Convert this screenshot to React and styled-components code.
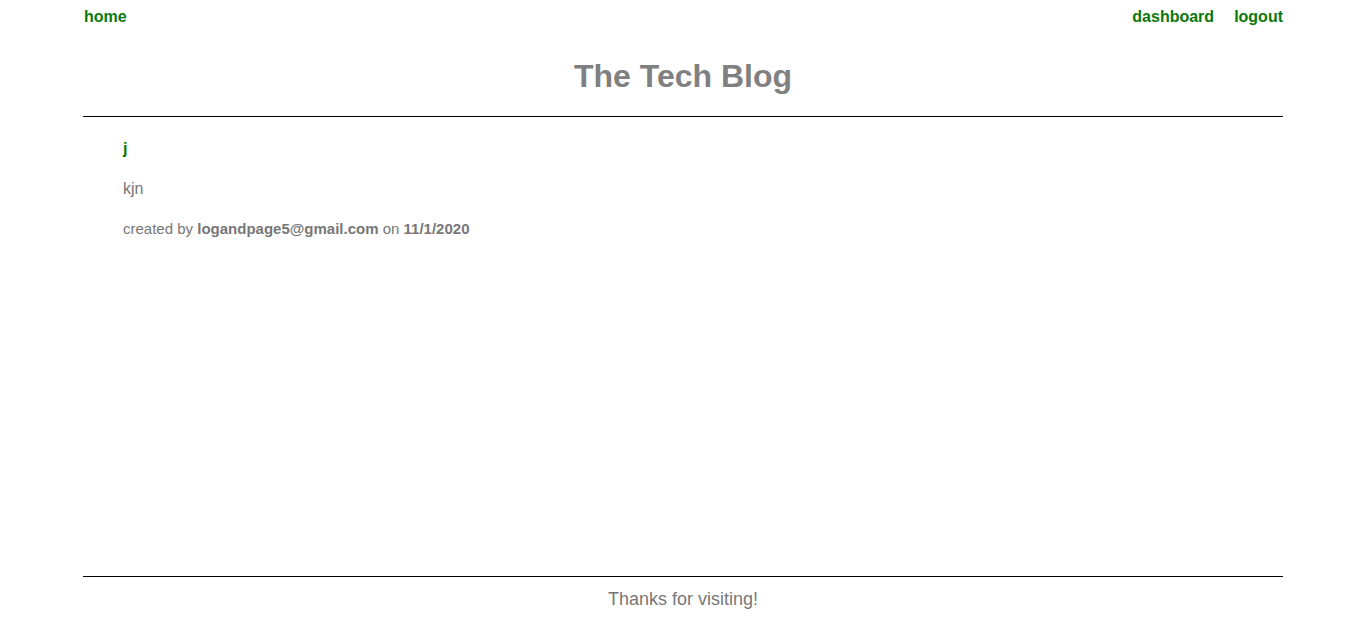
import React from "react";
import styled, { createGlobalStyle } from "styled-components";

const GlobalStyle = createGlobalStyle`
  html, body {
    margin: 0;
    padding: 0;
    background: #fff;
  }
  body {
    font-family: "Liberation Sans", Arial, sans-serif;
    color: #777;
  }
`;

const Page = styled.div`
  box-sizing: border-box;
  display: flex;
  flex-direction: column;
  width: 1200px;
  min-height: 620px;
  margin: 0 auto;
`;

const Nav = styled.nav`
  display: flex;
  justify-content: space-between;
  align-items: center;
  padding: 8px 0 0 1px;
`;

const NavGroup = styled.div`
  display: flex;
  gap: 20px;
`;

const NavLink = styled.a`
  color: #0b780b;
  font-weight: bold;
  font-size: 16px;
  line-height: 18px;
  text-decoration: none;
  cursor: pointer;
`;

const Header = styled.header`
  border-bottom: 1px solid #000;
`;

const Title = styled.h1`
  margin: 0;
  padding: 32px 0 21px;
  text-align: center;
  color: #808080;
  font-size: 32px;
  line-height: 37px;
  font-weight: bold;
`;

const Main = styled.main`
  flex: 1;
  padding: 23px 40px 0;
`;

const Post = styled.article`
  display: flex;
  flex-direction: column;
  gap: 22px;
`;

const PostTitle = styled.a`
  color: #0b780b;
  font-weight: bold;
  font-size: 16px;
  line-height: 18px;
  text-decoration: none;
`;

const PostBody = styled.p`
  margin: 0;
  font-size: 16px;
  line-height: 18px;
  color: #777;
`;

const Meta = styled.p`
  margin: 0;
  font-size: 15px;
  line-height: 18px;
  color: #777;

  strong {
    font-weight: bold;
  }
`;

const Footer = styled.footer`
  border-top: 1px solid #000;
  padding: 12px 0 10px;
  text-align: center;
  font-size: 18px;
  line-height: 21px;
  color: #777;
`;

const posts = [
  {
    id: 1,
    title: "j",
    body: "kjn",
    author: "logandpage5@gmail.com",
    date: "11/1/2020",
  },
];

const App = () => {
  return (
    <React.Fragment>
      <GlobalStyle />
      <Page>
        <Header>
          <Nav>
            <NavLink>home</NavLink>
            <NavGroup>
              <NavLink>dashboard</NavLink>
              <NavLink>logout</NavLink>
            </NavGroup>
          </Nav>
          <Title>The Tech Blog</Title>
        </Header>
        <Main>
          {posts.map((p) => (
            <Post key={p.id}>
              <PostTitle>{p.title}</PostTitle>
              <PostBody>{p.body}</PostBody>
              <Meta>
                created by <strong>{p.author}</strong> on <strong>{p.date}</strong>
              </Meta>
            </Post>
          ))}
        </Main>
        <Footer>Thanks for visiting!</Footer>
      </Page>
    </React.Fragment>
  );
};

export default App;
